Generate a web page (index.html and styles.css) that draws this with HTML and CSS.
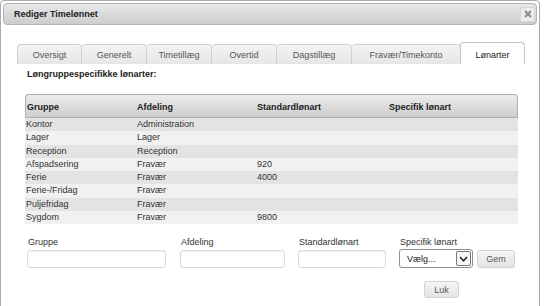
FILE: index.html
```html
<!doctype html>
<html lang="da">
  <head>
    <meta charset="UTF-8" />
    <meta name="viewport" content="width=device-width, initial-scale=1.0" />
    <title>Rediger Timelønnet</title>
    <link rel="stylesheet" href="styles.css">
  </head>
  <body>
    <div class="dialog">
      <div class="titlebar">
        <span class="title">Rediger Timelønnet</span>
        <button class="close" type="button" aria-label="Luk">
          <svg width="8" height="8" viewBox="0 0 8 8">
            <path d="M1 1 L7 7 M7 1 L1 7" stroke="#8a8a8a" stroke-width="2" fill="none" />
          </svg>
        </button>
      </div>

      <ul class="tabs">
        <li class="tab">Oversigt</li>
        <li class="tab">Generelt</li>
        <li class="tab">Timetillæg</li>
        <li class="tab">Overtid</li>
        <li class="tab tab-mid">Dagstillæg</li>
        <li class="tab tab-wide">Fravær/Timekonto</li>
        <li class="tab active">Lønarter</li>
      </ul>

      <div class="panel">
        <h3>Løngruppespecifikke lønarter:</h3>

        <table class="grid">
          <thead>
            <tr>
              <th class="c1">Gruppe</th>
              <th class="c2">Afdeling</th>
              <th class="c3">Standardlønart</th>
              <th>Specifik lønart</th>
            </tr>
          </thead>
          <tbody>
            <tr><td>Kontor</td><td>Administration</td><td></td><td></td></tr>
            <tr><td>Lager</td><td>Lager</td><td></td><td></td></tr>
            <tr><td>Reception</td><td>Reception</td><td></td><td></td></tr>
            <tr><td>Afspadsering</td><td>Fravær</td><td>920</td><td></td></tr>
            <tr><td>Ferie</td><td>Fravær</td><td>4000</td><td></td></tr>
            <tr><td>Ferie-/Fridag</td><td>Fravær</td><td></td><td></td></tr>
            <tr><td>Puljefridag</td><td>Fravær</td><td></td><td></td></tr>
            <tr><td>Sygdom</td><td>Fravær</td><td>9800</td><td></td></tr>
          </tbody>
        </table>

        <form class="add-form">
          <div class="field f-gruppe">
            <label for="gruppe">Gruppe</label>
            <input type="text" id="gruppe" />
          </div>
          <div class="field f-afdeling">
            <label for="afdeling">Afdeling</label>
            <input type="text" id="afdeling" />
          </div>
          <div class="field f-standard">
            <label for="standard">Standardlønart</label>
            <input type="text" id="standard" />
          </div>
          <div class="field f-specifik">
            <label for="specifik">Specifik lønart</label>
            <div class="select-row">
              <div class="select-wrap">
                <select id="specifik">
                  <option>Vælg...</option>
                </select>
                <span class="select-arrow">
                  <svg width="9" height="6" viewBox="0 0 9 6">
                    <path d="M1 1 L4.5 4.8 L8 1" stroke="#222" stroke-width="1.5" fill="none" />
                  </svg>
                </span>
              </div>
              <button type="button" class="btn">Gem</button>
            </div>
          </div>
        </form>

        <div class="footer">
          <button type="button" class="btn btn-luk">Luk</button>
        </div>
      </div>
    </div>
  </body>
</html>
```

FILE: styles.css
```css
body {
  margin: 0;
  font-family: "Liberation Sans", Arial, sans-serif;
  font-size: 9px;
  color: #222;
  background: #fff;
  overflow: hidden;
}
.dialog {
  width: 534px;
  min-height: 320px;
  padding: 2px;
  border: 1px solid #aaa;
  border-radius: 4px 4px 0 0;
}
.titlebar {
  display: flex;
  align-items: center;
  justify-content: space-between;
  height: 20px;
  padding: 0 1px 0 10px;
  border: 1px solid #b4b4b4;
  border-radius: 4px;
  background: linear-gradient(#e8e8e8, #cdcdcd);
}
.title {
  font-size: 9px;
  font-weight: bold;
  color: #222;
}
.close {
  display: flex;
  align-items: center;
  justify-content: center;
  width: 15px;
  height: 15px;
  padding: 0;
  border: 1px solid #d6d6d6;
  border-radius: 2px;
  background: #ececec;
}
.tabs {
  display: flex;
  list-style: none;
  margin: 17px 0 0 14px;
  padding: 0;
  height: 22px;
  align-items: flex-end;
}
.tab {
  box-sizing: border-box;
  width: 65px;
  height: 20px;
  padding-top: 5px;
  text-align: center;
  color: #555;
  border: 1px solid #d0d0d0;
  border-bottom: none;
  border-radius: 4px 4px 0 0;
  background: linear-gradient(#f3f3f3, #e6e6e6);
}
.tab + .tab {
  border-left: none;
}
.tab-mid {
  width: 75px;
}
.tab-wide {
  width: 109px;
}
.tab.active {
  width: 65px;
  height: 22px;
  margin-left: -1px;
  padding-top: 7px;
  color: #222;
  background: #fff;
  border: 1px solid #c4c4c4;
  border-bottom: none;
}
.panel {
  padding: 0 0 0 22px;
}
h3 {
  margin: 5px 0 0 2px;
  font-size: 9px;
  line-height: 11px;
  font-weight: bold;
  color: #222;
}
.grid {
  width: 493px;
  margin-top: 14px;
  border-collapse: separate;
  border-spacing: 0;
}
.grid th {
  height: 20px;
  padding: 2px 0 0 1px;
  text-align: left;
  font-weight: bold;
  color: #222;
  background: linear-gradient(#ececec, #cecece);
  border-top: 1px solid #b0b0b0;
  border-bottom: 1px solid #b0b0b0;
}
.grid th:first-child {
  border-left: 1px solid #b0b0b0;
  border-top-left-radius: 4px;
}
.grid th:last-child {
  border-right: 1px solid #b0b0b0;
  border-top-right-radius: 4px;
}
.grid .c1 {
  width: 109px;
}
.grid .c2 {
  width: 119px;
}
.grid .c3 {
  width: 131px;
}
.grid td {
  height: 13.25px;
  padding: 0 0 0 1px;
  line-height: 11px;
  color: #333;
}
.grid tbody tr:nth-child(odd) td {
  background: #e3e3e3;
}
.grid tbody tr:nth-child(even) td {
  background: #f1f1f1;
}
.add-form {
  display: flex;
  margin: 12px 0 0 2px;
}
.field {
  display: flex;
  flex-direction: column;
}
.field label {
  color: #333;
  line-height: 12px;
  margin: 0 0 1px 1px;
}
.field input {
  box-sizing: border-box;
  height: 18px;
  margin-top: 1px;
  border: 1px solid #dadada;
  border-radius: 3px;
  background: #fff;
  box-shadow: inset 0 1px 1px #f0f0f0;
}
.f-gruppe input {
  width: 139px;
}
.f-afdeling {
  margin-left: 14px;
}
.f-afdeling input {
  width: 105px;
}
.f-standard {
  margin-left: 13px;
}
.f-standard input {
  width: 88px;
}
.f-specifik {
  margin-left: 13px;
}
.select-row {
  display: flex;
  align-items: center;
  gap: 4px;
}
.select-wrap {
  position: relative;
}
.select-wrap select {
  box-sizing: border-box;
  width: 74px;
  height: 19px;
  padding: 0 0 0 7px;
  appearance: none;
  font-family: "Liberation Sans", Arial, sans-serif;
  font-size: 9px;
  color: #222;
  border: 1px solid #8e8e8e;
  border-radius: 3px;
  background: #fff;
}
.select-arrow {
  position: absolute;
  right: 2px;
  top: 2px;
  box-sizing: border-box;
  width: 15px;
  height: 15px;
  display: flex;
  align-items: center;
  justify-content: center;
  border: 1px solid #777;
  border-radius: 2px;
  background: #f7f7f7;
  pointer-events: none;
}
.btn {
  box-sizing: border-box;
  height: 18px;
  padding: 0 8px;
  font-family: "Liberation Sans", Arial, sans-serif;
  font-size: 9px;
  color: #555;
  border: 1px solid #d3d3d3;
  border-radius: 3px;
  background: linear-gradient(#f6f6f6, #e3e3e3);
}
.f-specifik .btn {
  width: 38px;
}
.footer {
  padding: 13px 0 0 399px;
}
.btn-luk {
  width: 35px;
  height: 17px;
}
```
